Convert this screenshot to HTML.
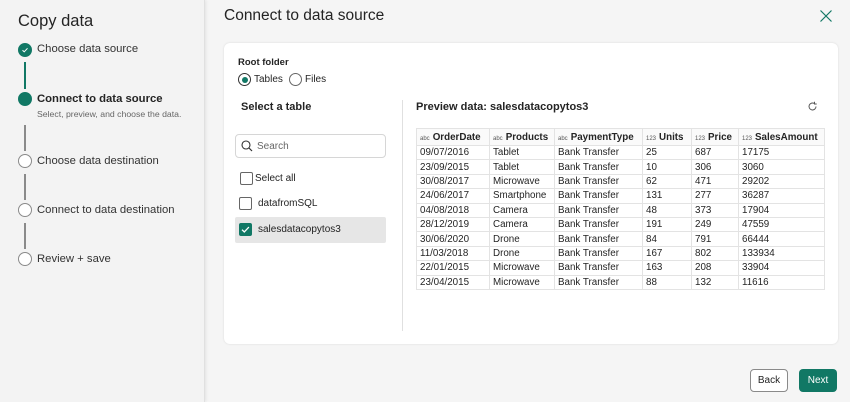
<!DOCTYPE html>
<html><head><meta charset="utf-8"><style>
*{box-sizing:border-box;margin:0;padding:0}
body{width:850px;height:402px;overflow:hidden;font-family:"Liberation Sans",sans-serif;background:#f5f5f5;position:relative;color:#242424}
.left{position:absolute;left:0;top:0;width:205px;height:402px;background:#f3f3f3;border-right:1px solid #e0e0e0;box-shadow:1px 0 3px rgba(0,0,0,.08)}
.abs{position:absolute;white-space:nowrap}
.circ{position:absolute;width:14px;height:14px;border-radius:50%;border:1px solid #8a8a8a;background:#fff}
.filled{background:#117865;border-color:#117865}
.vl{position:absolute;width:1.5px;background:#8a8a8a;left:24px}
.card{position:absolute;left:224px;top:43px;width:614px;height:301px;background:#fff;border-radius:6px;box-shadow:0 0 2px rgba(0,0,0,.12)}
table{position:absolute;left:416px;top:128px;border-collapse:collapse;font-size:9.8px;width:409px}
td,th{border:1px solid #e3e3e3;padding:0 3px;height:14.4px;text-align:left;font-weight:normal;white-space:nowrap}
th{height:17px;background:#fafafa;font-weight:bold;font-size:9.8px}
th small{font-size:6px;font-weight:normal;color:#555;margin-right:3px}
.cb{position:absolute;width:13px;height:13px;border:1px solid #666;border-radius:2px;background:#fff}
.st{font-size:11.3px;color:#333}
</style></head><body>
<div class="left">
<div class="abs" style="left:18px;top:12px;font-size:16.5px">Copy data</div>
<div class="circ filled" style="left:18px;top:43px"><svg width="12" height="12" viewBox="0 0 12 12" style="position:absolute;left:0;top:0"><path d="M3.5 6.2l1.7 1.6 3.3-3.5" stroke="#fff" stroke-width="1" fill="none"/></svg></div>
<div class="abs st" style="left:37px;top:43px">Choose data source</div>
<div class="vl" style="top:62px;height:27px;background:#117865"></div>
<div class="circ filled" style="left:18px;top:92px"></div>
<div class="abs" style="left:37px;top:93px;font-size:11.3px;font-weight:bold">Connect to data source</div>
<div class="abs" style="left:37px;top:109px;font-size:8.7px;color:#666">Select, preview, and choose the data.</div>
<div class="vl" style="top:125px;height:26px"></div>
<div class="circ" style="left:18px;top:154px"></div>
<div class="abs st" style="left:37px;top:155px">Choose data destination</div>
<div class="vl" style="top:174px;height:26px"></div>
<div class="circ" style="left:18px;top:203px"></div>
<div class="abs st" style="left:37px;top:204px">Connect to data destination</div>
<div class="vl" style="top:223px;height:26px"></div>
<div class="circ" style="left:18px;top:252px"></div>
<div class="abs st" style="left:37px;top:253px">Review + save</div>
</div>
<div class="abs" style="left:224px;top:7px;font-size:15.5px">Connect to data source</div>
<svg class="abs" style="left:820px;top:10px" width="12" height="12" viewBox="0 0 12 12"><path d="M0.5 0.5L11.5 11.5M11.5 0.5L0.5 11.5" stroke="#117865" stroke-width="1.2"/></svg>
<div class="card"></div>
<div class="abs" style="left:238px;top:57px;font-size:9.5px;font-weight:bold">Root folder</div>
<div class="circ" style="left:238px;top:73px;width:13px;height:13px;border-color:#333"><div style="position:absolute;left:2.5px;top:2.5px;width:6px;height:6px;border-radius:50%;background:#117865"></div></div>
<div class="abs" style="left:254px;top:74px;font-size:10px">Tables</div>
<div class="circ" style="left:289px;top:73px;width:13px;height:13px;border-color:#666"></div>
<div class="abs" style="left:305px;top:74px;font-size:10px">Files</div>
<div class="abs" style="left:241px;top:101px;font-size:11px;font-weight:bold">Select a table</div>
<div class="abs" style="left:235px;top:134px;width:151px;height:24px;border:1px solid #d6d6d6;border-radius:4px"></div>
<svg class="abs" style="left:241px;top:140px" width="12" height="12" viewBox="0 0 12 12"><circle cx="5" cy="5" r="4" stroke="#333" fill="none" stroke-width="1.1"/><path d="M8 8L11 11" stroke="#333" stroke-width="1.2"/></svg>
<div class="abs" style="left:257px;top:141px;font-size:10px;color:#666">Search</div>
<div class="cb" style="left:240px;top:172px"></div>
<div class="abs" style="left:255px;top:173px;font-size:10px">Select all</div>
<div class="cb" style="left:239px;top:197px"></div>
<div class="abs" style="left:258px;top:198px;font-size:10px">datafromSQL</div>
<div class="abs" style="left:235px;top:217px;width:151px;height:26px;background:#e6e6e6;border-radius:2px"></div>
<div class="cb" style="left:239px;top:223px;background:#117865;border-color:#117865"><svg width="11" height="11" viewBox="0 0 11 11" style="position:absolute;left:0;top:0"><path d="M2 5.7l2.3 2.2 4.6-4.8" stroke="#fff" stroke-width="1.3" fill="none"/></svg></div>
<div class="abs" style="left:258px;top:224px;font-size:10px">salesdatacopytos3</div>
<div class="abs" style="left:402px;top:100px;width:1px;height:231px;background:#e0e0e0"></div>
<div class="abs" style="left:416px;top:101px;font-size:11px;font-weight:bold">Preview data: salesdatacopytos3</div>
<svg class="abs" style="left:807px;top:101px" width="11" height="11" viewBox="0 0 11 11"><path d="M9 5.5A3.5 3.5 0 1 1 7.5 2.6M7.5 0.8v2.2h2.2" stroke="#555" fill="none" stroke-width="1"/></svg>
<table>
<tr><th style="width:73px"><small>abc</small>OrderDate</th><th style="width:65px"><small>abc</small>Products</th><th style="width:88px"><small>abc</small>PaymentType</th><th style="width:49px"><small>123</small>Units</th><th style="width:47px"><small>123</small>Price</th><th><small>123</small>SalesAmount</th></tr>
<tr><td>09/07/2016</td><td>Tablet</td><td>Bank Transfer</td><td>25</td><td>687</td><td>17175</td></tr>
<tr><td>23/09/2015</td><td>Tablet</td><td>Bank Transfer</td><td>10</td><td>306</td><td>3060</td></tr>
<tr><td>30/08/2017</td><td>Microwave</td><td>Bank Transfer</td><td>62</td><td>471</td><td>29202</td></tr>
<tr><td>24/06/2017</td><td>Smartphone</td><td>Bank Transfer</td><td>131</td><td>277</td><td>36287</td></tr>
<tr><td>04/08/2018</td><td>Camera</td><td>Bank Transfer</td><td>48</td><td>373</td><td>17904</td></tr>
<tr><td>28/12/2019</td><td>Camera</td><td>Bank Transfer</td><td>191</td><td>249</td><td>47559</td></tr>
<tr><td>30/06/2020</td><td>Drone</td><td>Bank Transfer</td><td>84</td><td>791</td><td>66444</td></tr>
<tr><td>11/03/2018</td><td>Drone</td><td>Bank Transfer</td><td>167</td><td>802</td><td>133934</td></tr>
<tr><td>22/01/2015</td><td>Microwave</td><td>Bank Transfer</td><td>163</td><td>208</td><td>33904</td></tr>
<tr><td>23/04/2015</td><td>Microwave</td><td>Bank Transfer</td><td>88</td><td>132</td><td>11616</td></tr>
</table>
<div class="abs" style="left:750px;top:369px;width:38px;height:23px;border:1px solid #8a8a8a;border-radius:4px;background:#fff;font-size:10px;text-align:center;line-height:21px">Back</div>
<div class="abs" style="left:799px;top:369px;width:38px;height:23px;border-radius:4px;background:#117865;color:#fff;font-size:10px;text-align:center;line-height:23px">Next</div>
</body></html>
